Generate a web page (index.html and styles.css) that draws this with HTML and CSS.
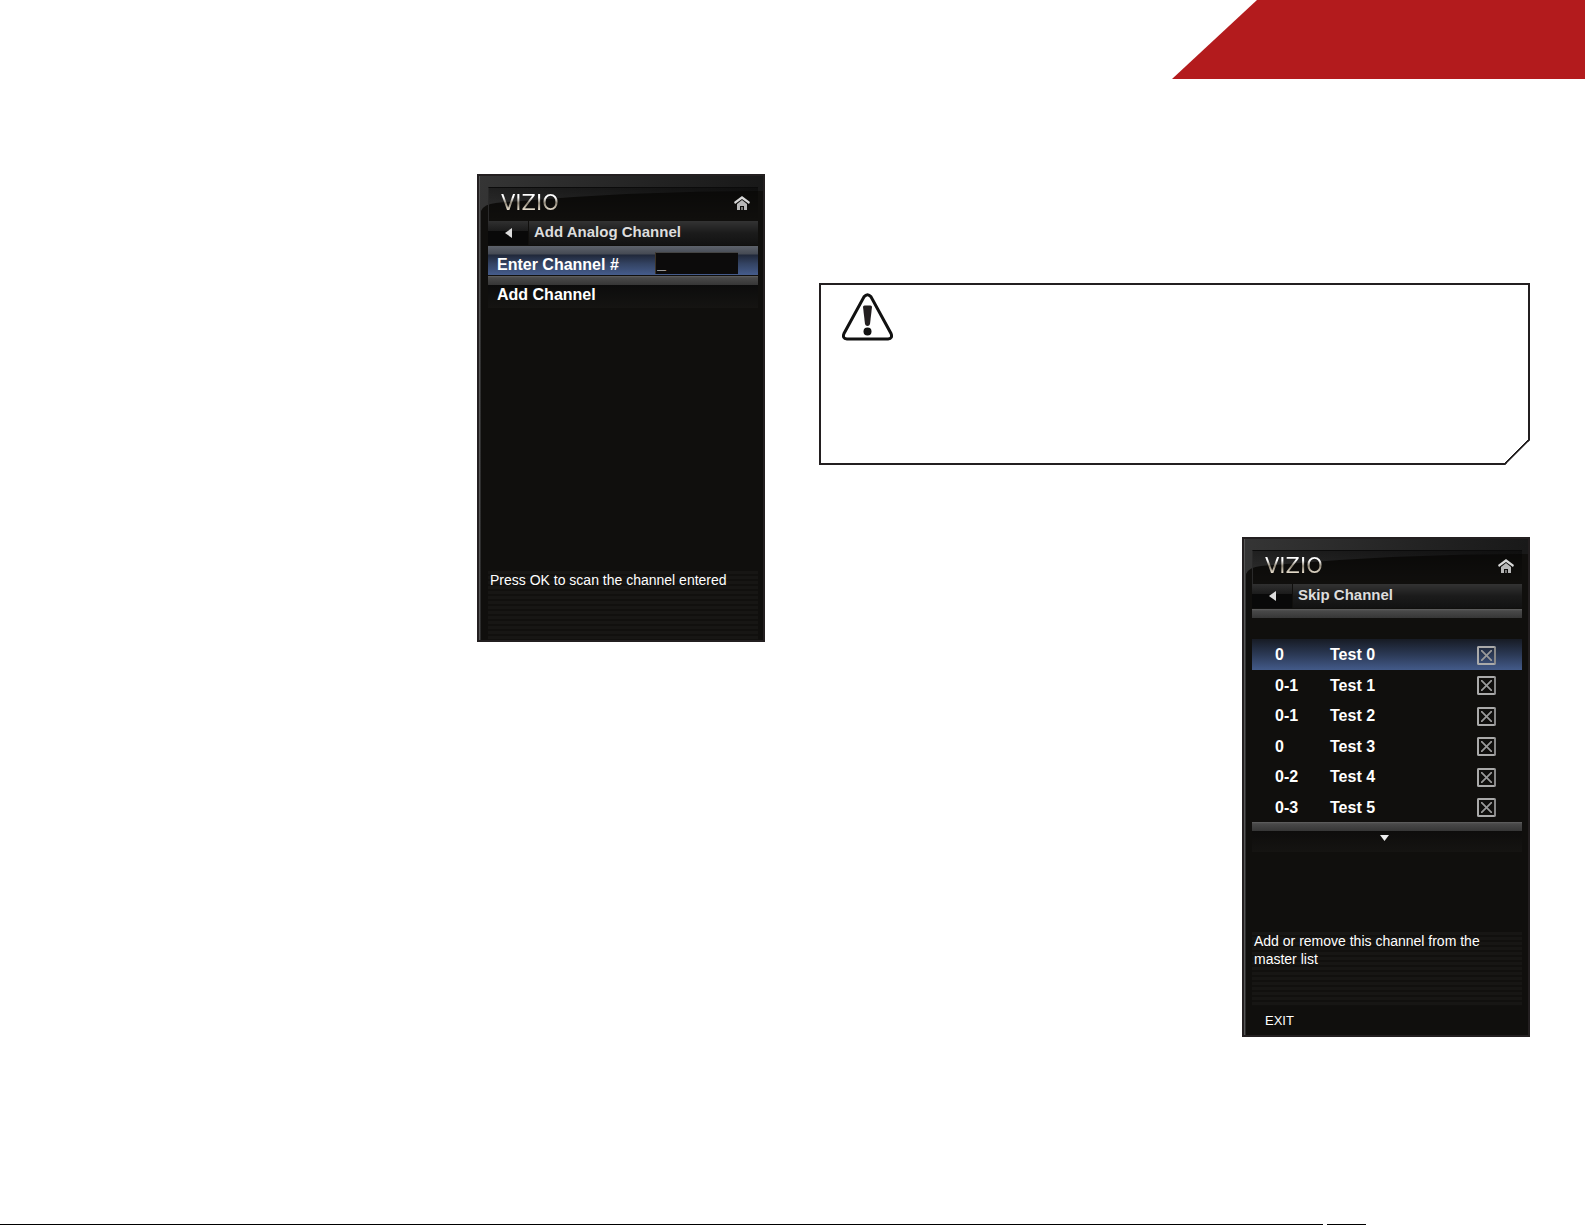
FILE: index.html
```html
<!DOCTYPE html>
<html lang="en">

<head>
    <meta charset="UTF-8">
    <meta name="viewport" content="width=device-width, initial-scale=1.0">
    <title>VIZIO Channel Menus</title>
    <link rel="stylesheet" href="styles.css">
</head>

<body>
    <header class="page-header">
        <div class="page-tab"></div>
    </header>
    <main class="columns">
        <section class="column">
            <form class="menu menu-add">
                <svg class="gloss" viewBox="0 0 284 464" preserveAspectRatio="none" aria-hidden="true">
                    <path d="M2 464V35Q5 28 17 27Q150 15 284 15V464Z" />
                </svg>
                <div class="menu-top">
                    <span class="brand">VIZIO</span>
                    <a class="home" href="#" aria-label="Home">
                        <svg viewBox="0 0 16 14" width="16" height="14">
                            <path fill="#d8d8d8" d="M8 0 0 6l1 2 7-5 7 5 1-2Z" />
                            <path fill="#b8b8b8" d="M8 4 3 8v6h3v-4h4v4h3V8Z" />
                            <path fill="#777" d="M7 11h2v3H7Z" />
                        </svg>
                    </a>
                </div>
                <div class="menu-title">
                    <button type="button" class="back" aria-label="Back">
                        <svg viewBox="0 0 7 10" width="7" height="10"><path fill="#ddd" d="M7 0v10L0 5Z" /></svg>
                    </button>
                    <h2>Add Analog Channel</h2>
                </div>
                <div class="field">
                    <label for="channel">Enter Channel #</label>
                    <input type="text" id="channel" value="_">
                </div>
                <div class="bar"></div>
                <button type="submit" class="option">Add Channel</button>
                <p class="help">Press OK to scan the channel entered</p>
            </form>
        </section>

        <section class="column">
            <div class="notice">
                <svg viewBox="0 0 52 48" width="52" height="48" role="img" aria-label="Warning">
                    <path d="M23 3.800Q26.500 -.5 30 3.800L50 40.500Q52 45.500 47 46H6Q1 45.500 3 40.500Z" fill="#fff" stroke="#111" stroke-width="3" />
                    <path d="M22 14Q22 12.500 23.500 12.500H29.500Q31 12.500 31 14L29 31Q28.500 33 26.500 33T24 31Z" fill="#231f20" />
                    <circle cx="26.500" cy="38.500" r="4" fill="#111" />
                </svg>
            </div>

            <form class="menu menu-skip">
                <svg class="gloss" viewBox="0 0 284 496" preserveAspectRatio="none" aria-hidden="true">
                    <path d="M2 496V35Q5 28 17 27Q150 15 284 15V496Z" />
                </svg>
                <div class="menu-top">
                    <span class="brand">VIZIO</span>
                    <a class="home" href="#" aria-label="Home">
                        <svg viewBox="0 0 16 14" width="16" height="14">
                            <path fill="#d8d8d8" d="M8 0 0 6l1 2 7-5 7 5 1-2Z" />
                            <path fill="#b8b8b8" d="M8 4 3 8v6h3v-4h4v4h3V8Z" />
                            <path fill="#777" d="M7 11h2v3H7Z" />
                        </svg>
                    </a>
                </div>
                <div class="menu-title">
                    <button type="button" class="back" aria-label="Back">
                        <svg viewBox="0 0 7 10" width="7" height="10"><path fill="#ddd" d="M7 0v10L0 5Z" /></svg>
                    </button>
                    <h2>Skip Channel</h2>
                </div>
                <div class="bar"></div>
                <table class="channels">
                    <tr class="selected">
                        <td class="number">0</td>
                        <td><label for="skip0">Test 0</label></td>
                        <td class="check"><input type="checkbox" id="skip0" checked></td>
                    </tr>
                    <tr>
                        <td class="number">0-1</td>
                        <td><label for="skip1">Test 1</label></td>
                        <td class="check"><input type="checkbox" id="skip1" checked></td>
                    </tr>
                    <tr>
                        <td class="number">0-1</td>
                        <td><label for="skip2">Test 2</label></td>
                        <td class="check"><input type="checkbox" id="skip2" checked></td>
                    </tr>
                    <tr>
                        <td class="number">0</td>
                        <td><label for="skip3">Test 3</label></td>
                        <td class="check"><input type="checkbox" id="skip3" checked></td>
                    </tr>
                    <tr>
                        <td class="number">0-2</td>
                        <td><label for="skip4">Test 4</label></td>
                        <td class="check"><input type="checkbox" id="skip4" checked></td>
                    </tr>
                    <tr>
                        <td class="number">0-3</td>
                        <td><label for="skip5">Test 5</label></td>
                        <td class="check"><input type="checkbox" id="skip5" checked></td>
                    </tr>
                </table>
                <div class="bar"></div>
                <button type="button" class="more" aria-label="More channels">
                    <svg viewBox="0 0 9 6" width="9" height="6"><path fill="#eee" d="M0 0h9L4.500 6Z" /></svg>
                </button>
                <p class="help">Add or remove this channel from the master list</p>
                <button type="button" class="exit">EXIT</button>
            </form>
        </section>
    </main>
    <footer class="page-edge"></footer>
</body>

</html>
```
FILE: styles.css
```css
:root {
    --ink: #231f20;
    --red: #b31b1d;
    --panel: #100f0d;
}

* {
    box-sizing: border-box;
}

body {
    margin: 0;
    min-height: 100vh;
    display: flex;
    flex-direction: column;
    background: #fff;
    font-family: "Liberation Sans", Arial, sans-serif;
}

h2,
p {
    margin: 0;
}

button,
input {
    margin: 0;
    padding: 0;
    border: none;
    border-radius: 0;
    background: none;
    color: inherit;
    font: inherit;
}

svg {
    display: block;
}

.page-header {
    display: flex;
    justify-content: flex-end;
}

.page-tab {
    width: 413px;
    height: 79px;
    background: var(--red);
    clip-path: polygon(85px 0, 100% 0, 100% 100%, 0 100%);
}

.columns {
    flex: 1;
    display: grid;
    grid-template-columns: 1fr 1fr;
    gap: 54px;
    padding: 95px 55px 0 54px;
}

.column {
    display: flex;
    flex-direction: column;
    align-items: flex-end;
}

/* Warning box with the lower right corner cut off */
.notice {
    width: 100%;
    min-height: 182px;
    margin: 109px 0 72px;
    padding: 8px 20px;
    border: 2px solid var(--ink);
    background: linear-gradient(135deg, transparent calc(50% - 2px), var(--ink) calc(50% - 2px)) right bottom / 25px 25px no-repeat border-box;
    clip-path: polygon(0 0, 100% 0, 100% calc(100% - 25px), calc(100% - 25px) 100%, 0 100%);
}

/* TV menus */
.menu {
    position: relative;
    width: 288px;
    display: flex;
    flex-direction: column;
    padding: 11px 5px 0 9px;
    border: 2px solid var(--ink);
    background: linear-gradient(100deg, #353535, #222 50%, #111);
    color: #fff;
    font-size: 16px;
    font-weight: bold;
    box-shadow: inset 1px 0 #555;
}

.menu-add {
    min-height: 468px;
}

.menu-skip {
    min-height: 500px;
    padding: 11px 6px 0 8px;
}

.menu > * {
    position: relative;
}

.menu > .gloss {
    position: absolute;
    inset: 0;
    width: 100%;
    height: 100%;
    fill: var(--panel);
}

.menu-top {
    height: 34px;
    display: flex;
    align-items: center;
    justify-content: space-between;
    padding: 0 8px 4px 12px;
    border-top: 1px solid #0b0b0b;
    border-left: 1px solid #2a2a2a;
    background: linear-gradient(#0006, transparent);
}

.brand {
    font-family: "DejaVu Sans", sans-serif;
    font-size: 21px;
    font-weight: normal;
    line-height: 28px;
    background: linear-gradient(#fff 30%, #8d8575 50%, #e8dfcf 75%);
    -webkit-background-clip: text;
    background-clip: text;
    color: transparent;
}

.menu-title {
    height: 24px;
    display: flex;
    gap: 1px;
    margin-bottom: 1px;
}

.back {
    width: 40px;
    display: flex;
    align-items: center;
    justify-content: center;
    background: linear-gradient(#303030, #1c1c1c 40%, #090909 40%);
}

.menu-title h2 {
    flex: 1;
    padding-left: 5px;
    background: linear-gradient(#333, #1b1b1b 50%, #121212);
    color: #ddd;
    font-size: 15px;
    line-height: 22px;
}

.bar {
    height: 9px;
    background: linear-gradient(#626262, #494949 20%, #363636);
}

.field {
    height: 29px;
    display: flex;
    align-items: flex-end;
    justify-content: space-between;
    margin-bottom: 1px;
    padding: 0 20px 1px 9px;
    background: linear-gradient(#5d626b, #454a54 8px, #20283a 9px, #344464 18px, #455c8b);
}

.field label {
    line-height: 18px;
}

.field input {
    width: 83px;
    height: 22px;
    padding-left: 1px;
    border-top: 1px solid #444;
    border-left: 1px solid #3c3428;
    background: #0c0b0b;
}

.option {
    height: 23px;
    padding: 0 9px 4px;
    background: linear-gradient(#0c0c0c, #151412);
    line-height: 18px;
    text-align: left;
}

.help {
    min-height: 69px;
    margin-top: auto;
    padding: 0 2px;
    background: repeating-linear-gradient(#171614 0 3px, #11100e 3px 5px);
    font-size: 14px;
    font-weight: normal;
    line-height: 18px;
}

.channels {
    width: 100%;
    height: 183px;
    margin-top: 21px;
    border-collapse: collapse;
}

.channels td {
    padding: 2px 0 0;
}

.channels .number {
    width: 78px;
    padding-left: 23px;
}

.channels .check {
    width: 45px;
}

.channels input {
    appearance: none;
    display: block;
    width: 19px;
    height: 19px;
    border: 2px solid #aaa;
    border-color: #aaa #888 #aaa #aaa;
    border-radius: 2px;
}

.channels input:checked {
    background:
        linear-gradient(45deg, transparent 44%, #999 46% 54%, transparent 56%) center / 11px 11px no-repeat,
        linear-gradient(-45deg, transparent 44%, #999 46% 54%, transparent 56%) center / 11px 11px no-repeat;
}

.selected {
    background: linear-gradient(#171b24, #2b3955 50%, #435a89);
}

.menu-skip .help {
    min-height: 74px;
}

.more {
    height: 21px;
    display: flex;
    justify-content: center;
    padding: 4px 5px 0 0;
    background: linear-gradient(#0e0d0c, #151412);
}

.exit {
    height: 29px;
    padding-left: 13px;
    font-size: 13px;
    font-weight: normal;
    text-align: left;
}

.page-edge {
    height: 1px;
    width: 1366px;
    max-width: 100%;
    background: linear-gradient(to right, #000 1323px, transparent 1323px 1327px, #000 1327px);
}
```
